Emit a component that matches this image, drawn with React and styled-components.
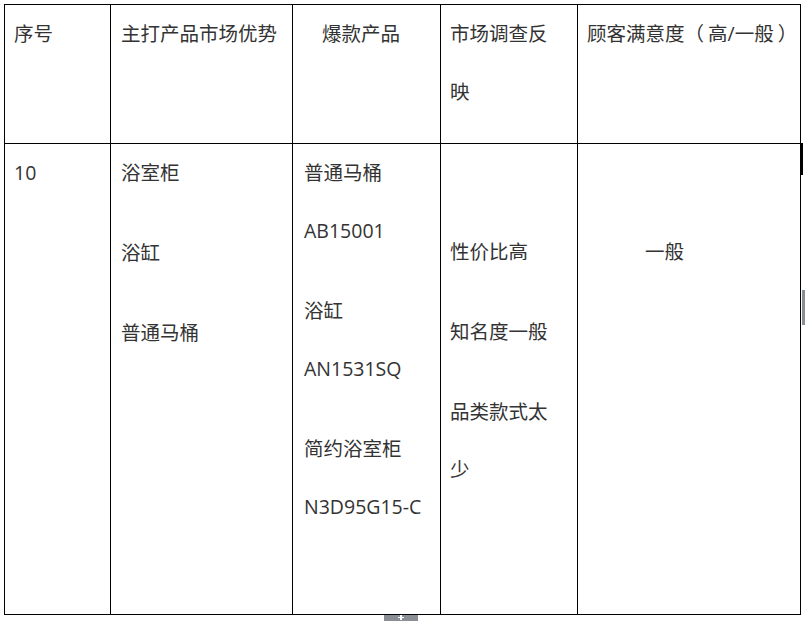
import React from 'react'
import styled, { createGlobalStyle } from 'styled-components'

const GlobalStyle = createGlobalStyle`
  html, body {
    margin: 0;
    padding: 0;
    background: #ffffff;
  }
  body {
    font-family: "Open Sans", "Noto Sans CJK SC", sans-serif;
    color: #333333;
  }
`

const Page = styled.div`
  position: relative;
  width: 805px;
  height: 621px;
  overflow: hidden;
  padding: 4px 0 0 4px;
  box-sizing: border-box;
`

const Grid = styled.div`
  display: grid;
  grid-template-columns: 106px 182px 148px 137px 223px;
  grid-template-rows: 139px 471px;
  border-left: 1px solid #000;
  border-top: 1px solid #000;
  width: max-content;
`

const Cell = styled.div`
  box-sizing: border-box;
  border-right: 1px solid #000;
  border-bottom: 1px solid #000;
  padding: ${p => p.$top || 0}px 4px 0 ${p => p.$left || 9}px;
  font-size: 19.5px;
  overflow: hidden;
`

const Para = styled.p`
  margin: 0 0 22px 0;
  line-height: 58px;
  white-space: nowrap;
`

const Line = styled.span`
  display: block;
`

/* the reference font leaves a gap inside full-width brackets */
const Paren = styled.span`
  margin: ${p => (p.$open ? '0 4px 0 0' : '0 0 0 4px')};
`

const Handle = styled.div`
  position: absolute;
  background: ${p => p.$color || '#8a8f96'};
`

const PlusMark = styled.span`
  position: absolute;
  left: 50%;
  top: 0;
  width: 2px;
  height: 5px;
  margin-left: -1px;
  background: #fff;

  &::after {
    content: '';
    position: absolute;
    left: -2px;
    top: 2px;
    width: 6px;
    height: 1px;
    background: #fff;
  }
`

export default function App() {
  return (
    <>
      <GlobalStyle />
      <Page>
        <Grid>
          <Cell><Para>序号</Para></Cell>
          <Cell $left={10}><Para>主打产品市场优势</Para></Cell>
          <Cell $left={29}><Para>爆款产品</Para></Cell>
          <Cell><Para><Line>市场调查反</Line><Line>映</Line></Para></Cell>
          <Cell>
            <Para>顾客满意度<Paren $open>（</Paren>高/一般<Paren>）</Paren></Para>
          </Cell>

          <Cell><Para>10</Para></Cell>
          <Cell $left={10}>
            <Para>浴室柜</Para>
            <Para>浴缸</Para>
            <Para>普通马桶</Para>
          </Cell>
          <Cell $left={11}>
            <Para><Line>普通马桶</Line><Line>AB15001</Line></Para>
            <Para><Line>浴缸</Line><Line>AN1531SQ</Line></Para>
            <Para><Line>简约浴室柜</Line><Line>N3D95G15-C</Line></Para>
          </Cell>
          <Cell $top={79}>
            <Para>性价比高</Para>
            <Para>知名度一般</Para>
            <Para><Line>品类款式太</Line><Line>少</Line></Para>
          </Cell>
          <Cell $top={79} $left={67}>
            <Para>一般</Para>
          </Cell>
        </Grid>
        <Handle $color="#000" style={{ left: 800, top: 143, width: 3, height: 32 }} />
        <Handle style={{ left: 802, top: 290, width: 3, height: 35 }} />
        <Handle style={{ left: 384, top: 615, width: 34, height: 6 }}>
          <PlusMark />
        </Handle>
      </Page>
    </>
  )
}
